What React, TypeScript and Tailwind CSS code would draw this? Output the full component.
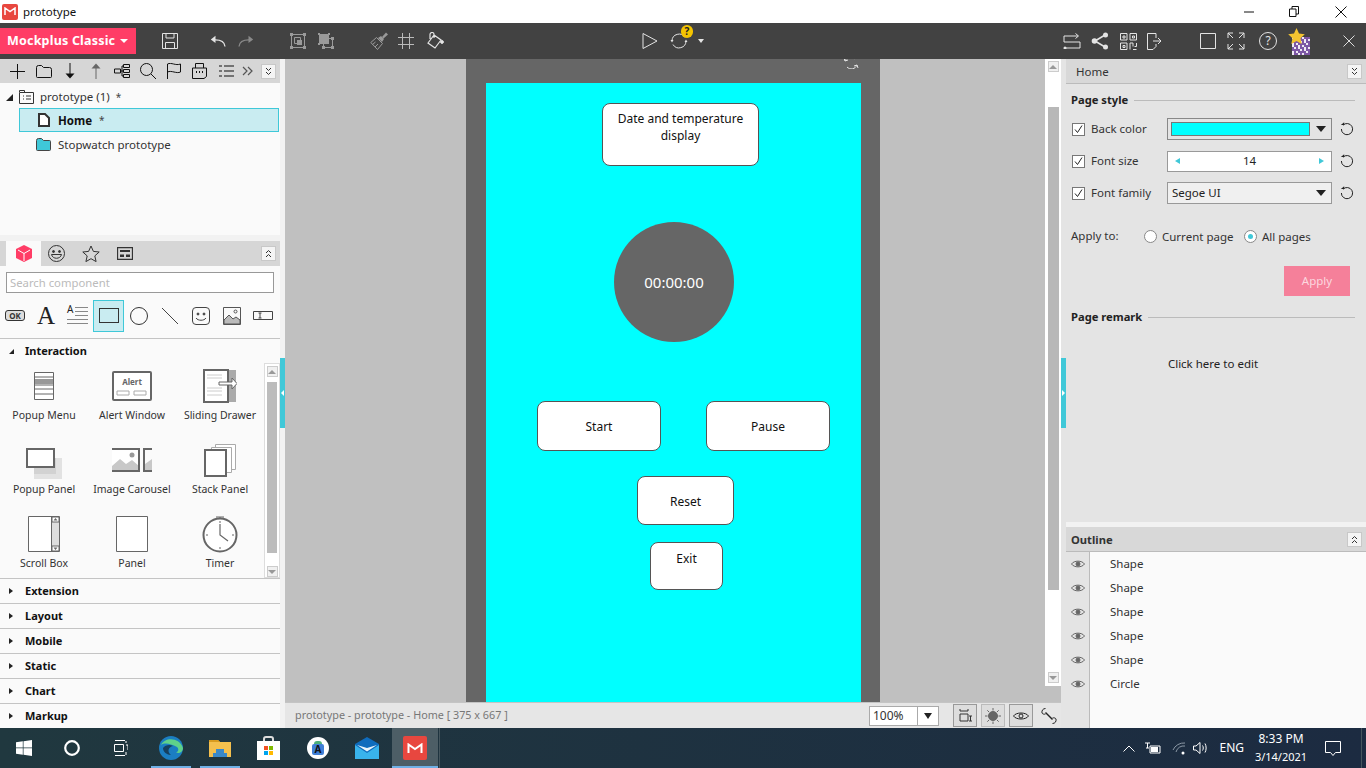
import type { ReactNode } from "react";

const groups = ["Extension", "Layout", "Mobile", "Static", "Chart", "Markup"];
const outline = ["Shape", "Shape", "Shape", "Shape", "Shape", "Circle"];

// the noisy qr badge behind the star, cells picked by a small hash
const qrCells = Array.from({ length: 81 }, (_, i) => ((i * 7 + (i % 5) * 3 + (i >> 2)) % 3 === 0 ? "#efeaf4" : "#7d57a5"));

function Ico({ w = 18, h = 18, className = "", children }: { w?: number; h?: number; className?: string; children: ReactNode }) {
  return (
    <svg width={w} height={h} viewBox={`0 0 ${w} ${h}`} fill="none" stroke="currentColor" strokeWidth="1" className={`shrink-0 ${className}`}>
      {children}
    </svg>
  );
}

function Collapse({ up = false }: { up?: boolean }) {
  return (
    <div className="w-[15px] h-[15px] bg-[#f4f4f4] border border-[#c8c8c8] flex items-center justify-center text-[#333]">
      <Ico w={9} h={9}>
        {up ? <path d="M2 4l2.500-2.500L7 4M2 8l2.500-2.500L7 8" /> : <path d="M2 1l2.500 2.500L7 1M2 5l2.500 2.500L7 5" />}
      </Ico>
    </div>
  );
}

function Eye() {
  return (
    <Ico w={14} h={10} className="text-[#666]">
      <path d="M.5 5C3 1.200 11 1.200 13.500 5 11 8.800 3 8.800.5 5z" />
      <circle cx="7" cy="5" r="2" fill="currentColor" />
    </Ico>
  );
}

function Reset() {
  return (
    <Ico w={14} h={14} className="text-[#222] ml-[8px]">
      <path d="M3 3.200A5.600 5.600 0 1 1 1.400 7" />
      <path d="M.8 3h3.400V.2z" fill="currentColor" stroke="none" />
    </Ico>
  );
}

function Check({ label }: { label: string }) {
  return (
    <div className="flex items-center w-[95px] shrink-0">
      <div className="w-[13px] h-[13px] bg-white border border-[#777] flex items-center justify-center">
        <Ico w={11} h={11} className="text-[#222]"><path d="M2 5.500l2.500 3L9 1.500" /></Ico>
      </div>
      <span className="ml-[6px] text-[#333]">{label}</span>
    </div>
  );
}

// blue splitter tab between the panels and the canvas
function Handle({ left = false }: { left?: boolean }) {
  return (
    <div className="w-[5px] pt-[299px]">
      <div className="w-[5px] h-[70px] bg-[#40c8d8] flex items-center justify-center">
        <span className={`w-0 h-0 border-y-[3px] border-y-transparent ${left ? "border-r-[3px] border-r-white" : "border-l-[3px] border-l-white"}`} />
      </div>
    </div>
  );
}

function TitleBar() {
  return (
    <div className="h-[23px] bg-white flex items-center text-[11.5px] text-[#111]">
      <div className="ml-[2px] w-[16px] h-[16px] rounded-[2px] bg-[#e8473f] flex items-center justify-center">
        <Ico w={12} h={9} className="text-white"><path d="M1 8V1l5 3.500L11 1v7" strokeWidth="1.500" /></Ico>
      </div>
      <span className="ml-[5px]">prototype</span>
      <Ico w={10} h={2} className="ml-auto mr-[35px]"><path d="M0 1h10" /></Ico>
      <Ico w={10} h={11} className="mr-[36px]"><path d="M.5 3h6.500v7.500H.5zM3 3V.5h6.500v7.500H7" /></Ico>
      <Ico w={12} h={12} className="mr-[19px]"><path d="M.5.500l11 11M11.500.5l-11 11" /></Ico>
    </div>
  );
}

function Toolbar() {
  return (
    <div className="h-[36px] bg-[#424242] flex items-center text-[#e4e4e4]">
      <div className="w-[136px] h-[26px] bg-[#ff3d66] flex items-center pl-[7px] text-white text-[12.5px] font-bold tracking-[0.2px]">
        Mockplus Classic
        <span className="ml-[5px] w-0 h-0 border-x-[4px] border-x-transparent border-t-[4px] border-t-white" />
      </div>
      <Ico w={16} h={16} className="ml-[26px]"><path d="M.5.500h15v15H.5zM4 .5v4.500h8V.5M3.500 15.500V9.500h9v6" /></Ico>
      <Ico w={16} h={12} className="ml-[32px]"><path d="M15 11.500C14.500 6.500 10 4.500 3 5" strokeWidth="1.300" /><path d="M5.500.8L.8 4.500l4.700 3.500z" fill="currentColor" stroke="none" /></Ico>
      <Ico w={16} h={12} className="ml-[12px] text-[#8a8a8a]"><path d="M1 11.500C1.500 6.500 6 4.500 13 5" strokeWidth="1.300" /><path d="M10.500.8l4.700 3.700-4.700 3.500z" fill="currentColor" stroke="none" /></Ico>
      <Ico w={16} h={16} className="ml-[36px] text-[#9a9a9a]"><path d="M1.500 1.500h13v13h-13z" /><path d="M4.500 4.500h6v6h-6z" /><path d="M7 7h5v5H7z" fill="currentColor" stroke="none" /><path d="M0 0h3v3H0zM13 0h3v3h-3zM0 13h3v3H0zM13 13h3v3h-3z" fill="currentColor" stroke="none" /></Ico>
      <Ico w={16} h={16} className="ml-[12px] text-[#9a9a9a]"><path d="M1 1h10v10H1z" fill="currentColor" stroke="none" /><path d="M5.500 5.500h9v9h-9z" /><path d="M0 0h2v2H0zM10 0h2v2h-2zM0 10h2v2H0zM13 13h3v3h-3zM13 4h3v3h-3zM4 13h3v3H4z" fill="currentColor" stroke="none" /></Ico>
      <Ico w={18} h={18} className="ml-[36px] text-[#9a9a9a]"><path d="M6.500 5.500l6 6-5 6L.8 10.500z" /><path d="M2.500 12.500l3-2.500M5 15l3-3" /><path d="M8 6l3-2 3 3-2 3z" fill="currentColor" stroke="none" /><path d="M12 5l4-4.500L18 2.500 13.500 6.500z" fill="currentColor" stroke="none" /></Ico>
      <Ico w={16} h={16} className="ml-[10px] text-[#bbb]"><path d="M4.500 0v16M11.500 0v16M0 4.500h16M0 11.500h16" /></Ico>
      <Ico w={18} h={18} className="ml-[12px]"><path d="M8 3l7 5-6 8-7-5zM4 7V2.500a2 2 0 0 1 4 0V6" strokeWidth="1.200" /><circle cx="16" cy="10" r="1.400" fill="currentColor" /></Ico>
      <Ico w={16} h={18} className="ml-[198px]"><path d="M1 1.500l14 7.500-14 7.500z" /></Ico>
      <div className="relative ml-[12px] w-[18px] h-[18px]">
        <Ico w={18} h={18}><path d="M2 9A7 7 0 0 1 15 5.500M16 9A7 7 0 0 1 3 12.500" /><path d="M.5 8h3L2 10.500zM14.500 10h3L16 7.500z" fill="currentColor" stroke="none" /></Ico>
        <div className="absolute top-[-7px] left-[11px] w-[12px] h-[13px] rounded-full bg-[#f5c400] text-[#222] text-[10px] font-bold leading-[13px] text-center">?</div>
      </div>
      <span className="ml-[10px] w-0 h-0 border-x-[3px] border-x-transparent border-t-[4px] border-t-[#e4e4e4]" />
      <Ico w={18} h={16} className="ml-[359px]"><path d="M15 3H1v6h16v6H3" /><path d="M12.500.5L15.500 3l-3 2.500" /><circle cx="2" cy="15" r="1.500" fill="currentColor" stroke="none" /></Ico>
      <Ico w={18} h={18} className="ml-[10px]"><path d="M4 9l10-6M4 9l10 6" strokeWidth="1.500" /><circle cx="3.500" cy="9" r="2.800" fill="currentColor" stroke="none" /><circle cx="14.500" cy="3" r="2.500" fill="currentColor" stroke="none" /><circle cx="14.500" cy="15" r="2.500" fill="currentColor" stroke="none" /></Ico>
      <Ico w={17} h={17} className="ml-[11px]"><path d="M.5.500h6.500v6.500H.5zM10 .5h6.500v6.500H10zM.5 10h6.500v6.500H.5zM3 3h2v2H3zM12.500 3h2v2h-2zM3 12.500h2v2H3zM10 16.500V10h3v3.500M16.500 10v3.500h-2M13 16.500h3.500" /></Ico>
      <Ico w={19} h={17} className="ml-[9px]"><path d="M10 5V.5H1.500v16H7l3-3V11M15 8H7M12 5l3 3-3 3" /></Ico>
      <Ico w={16} h={16} className="ml-[35px]"><path d="M.5.500h15v15H.5z" /></Ico>
      <Ico w={18} h={18} className="ml-[11px]"><path d="M1 6V1h5M12 1h5v5M17 12v5h-5M6 17H1v-5M1 1l5 5M17 1l-5 5M17 17l-5-5M1 17l5-5" /></Ico>
      <div className="ml-[14px] w-[18px] h-[18px] rounded-full border border-[#e4e4e4] text-[12px] leading-[16px] text-center">?</div>
      <div className="relative ml-[11px] w-[22px] h-[26px]">
        <div className="absolute left-[4px] top-[9px] w-[18px] h-[18px] grid grid-cols-[repeat(9,2px)]">
          {qrCells.map((c, i) => (
            <span key={i} className="w-[2px] h-[2px]" style={{ background: c }} />
          ))}
        </div>
        <svg width="17" height="17" viewBox="0 0 17 17" className="absolute left-0 top-0"><path d="M8.500 0l2.500 5.500 5.800.7-4.300 4 1.200 5.800-5.200-3-5.200 3 1.200-5.800-4.300-4 5.800-.7z" fill="#f4c430" /></svg>
      </div>
      <Ico w={12} h={12} className="ml-[33px] text-[#ddd]"><path d="M.5.500l11 11M11.500.5l-11 11" /></Ico>
    </div>
  );
}

function TreeTools() {
  return (
    <div className="h-[24px] bg-[#d6d6d6] flex items-center text-[#111] pl-[10px]">
      <Ico w={15} h={15}><path d="M7.500 0v15M0 7.500h15" /></Ico>
      <Ico w={16} h={13} className="ml-[11px]"><path d="M.5 2.500a2 2 0 0 1 2-2h3l2 2h6a2 2 0 0 1 2 2v7a1 1 0 0 1-1 1h-13a1 1 0 0 1-1-1z" /></Ico>
      <Ico w={12} h={16} className="ml-[12px]"><path d="M6 0v12" /><path d="M1.500 10.500h9L6 15.500z" fill="currentColor" stroke="none" /></Ico>
      <Ico w={12} h={16} className="ml-[14px] text-[#666]"><path d="M6 16V4" /><path d="M1.500 5.500h9L6 .5z" fill="currentColor" stroke="none" /></Ico>
      <Ico w={16} h={14} className="ml-[12px]"><path d="M.5 5h6v4h-6zM9.500.500h6v3h-6zM9.500 5.500h6v3h-6zM9.500 10.500h6v3h-6zM6.500 7h3M8 2v10h1.500M8 2h1.500" /></Ico>
      <Ico w={16} h={16} className="ml-[10px]"><circle cx="6.500" cy="6.500" r="6" /><path d="M11 11l5 5" /></Ico>
      <Ico w={14} h={16} className="ml-[11px]"><path d="M.5 16V1c4-2 8 2 13 0v8c-4 2-9-2-13 0" /></Ico>
      <Ico w={15} h={16} className="ml-[11px]"><path d="M.5 5h14v8.500L12 15.500H.5zM3.500 5V.5h8V5" /><path d="M4 9h1M7 9h1M10 9h1" strokeWidth="2" /></Ico>
      <Ico w={16} h={14} className="ml-[11px]"><path d="M6 2h10M6 7h10M6 12h10M1 2h3M1 7h3M1 12h3" /></Ico>
      <Ico w={12} h={10} className="ml-[8px] text-[#555]"><path d="M1 1l4 4-4 4M6 1l4 4-4 4" strokeWidth="1.200" /></Ico>
      <div className="ml-[7px]"><Collapse /></div>
    </div>
  );
}

function Tree() {
  return (
    <div className="h-[152px] bg-[#fafafa] pt-[3px] text-[11.5px] text-[#333]">
      <div className="h-[22px] flex items-center">
        <span className="ml-[6px] w-0 h-0 border-l-[7px] border-l-transparent border-b-[7px] border-b-[#222]" />
        <Ico w={15} h={14} className="ml-[6px] text-[#333]"><path d="M.5 2.500h14v11H.5zM.5 2V.5h5V2M4 6h1M4 9h1M7 6h5M7 9h5" /></Ico>
        <span className="ml-[6px]">prototype (1)</span>
        <span className="ml-[6px] text-[#444] text-[10px]">*</span>
      </div>
      <div className="ml-[19px] w-[260px] h-[24px] bg-[#c9ecf1] border border-[#3fc8d8] flex items-center">
        <Ico w={12} h={14} className="ml-[18px] text-[#333]"><path d="M1 1h6l4 4v8H1z" fill="#fff" strokeWidth="2" /></Ico>
        <span className="ml-[8px] mt-px font-bold text-[#111]">Home</span>
        <span className="ml-[7px] mt-px text-[#444] text-[10px]">*</span>
      </div>
      <div className="h-[24px] flex items-center">
        <Ico w={16} h={13} className="ml-[36px] text-[#444]"><path d="M.5 2.500a2 2 0 0 1 2-2h3l2 2h6a1 1 0 0 1 1 1v8a1 1 0 0 1-1 1h-12a1 1 0 0 1-1-1z" fill="#3fc8d8" /></Ico>
        <span className="ml-[6px] mt-[2px]">Stopwatch prototype</span>
      </div>
    </div>
  );
}

function ShapeBar() {
  return (
    <div className="h-[45px] flex items-center text-[#333]">
      <div className="ml-[5px] w-[20px] h-[11px] rounded-[3px] bg-[#ddd] border border-[#333] text-[8px] leading-[9px] text-center font-bold">OK</div>
      <span className="ml-[12px] w-[18px] text-center font-['Liberation_Serif',serif] text-[25px] leading-none text-[#222]">A</span>
      <div className="ml-[12px] w-[21px] h-[17px] flex flex-col justify-between relative">
        <span className="absolute left-0 top-[-3px] text-[10px] leading-[10px] text-[#222]">A</span>
        <span className="ml-[8px] h-px bg-[#888]" />
        <span className="ml-[8px] h-px bg-[#888]" />
        <span className="ml-[8px] h-px bg-[#888]" />
        <span className="h-px bg-[#888]" />
        <span className="h-px bg-[#888]" />
      </div>
      <div className="ml-[5px] w-[31px] h-[32px] bg-[#c9ecf1] border border-[#3fc8d8] flex items-center justify-center">
        <div className="w-[20px] h-[15px] border border-[#333]" />
      </div>
      <Ico w={18} h={18} className="ml-[6px]"><circle cx="9" cy="9" r="8.500" /></Ico>
      <Ico w={18} h={18} className="ml-[13px] text-[#444]"><path d="M1 1l16 16" /></Ico>
      <Ico w={18} h={18} className="ml-[13px] text-[#444]"><rect x=".5" y=".5" width="17" height="17" rx="3.500" /><circle cx="6" cy="7" r="1" fill="currentColor" /><circle cx="12" cy="7" r="1" fill="currentColor" /><path d="M4 11c2 3 8 3 10 0" /></Ico>
      <Ico w={18} h={18} className="ml-[13px] text-[#555]"><path d="M.5.500h17v17H.5z" /><path d="M1 13l5-5 4 4 3-2 4 3v4H1z" fill="#bbb" /><circle cx="12.500" cy="4.500" r="1.500" /></Ico>
      <Ico w={20} h={9} className="ml-[12px] text-[#444]"><path d="M.5.500h19v8H.5zM7 2v5M5.500 2h3M5.500 7h3" /></Ico>
    </div>
  );
}

function Item({ label, children }: { label: string; children: ReactNode }) {
  return (
    <div className="h-[74px] flex flex-col items-center">
      <div className="h-[46px] flex items-center justify-center">{children}</div>
      <span className="text-[10.5px] leading-[12px] text-[#333] whitespace-nowrap">{label}</span>
    </div>
  );
}

function Interaction() {
  return (
    <div className="flex h-[215px]">
      <div className="w-[264px] grid grid-cols-[88px_88px_88px] content-start">
        <Item label="Popup Menu">
          <svg width="20" height="28" viewBox="0 0 20 28" fill="none" stroke="#666"><path d="M.5.500h19v27H.5z" fill="#fff" /><path d="M1 7h18v5H1z" fill="#999" stroke="none" /><path d="M1 5h18M1 13h18M1 17h18M1 22h18" /></svg>
        </Item>
        <Item label="Alert Window">
          <svg width="40" height="30" viewBox="0 0 40 30" fill="none" stroke="#666"><rect x="1" y="1" width="38" height="28" rx="1" strokeWidth="2" fill="#fff" /><path d="M5 20h12v4H5zM22 20h12v4H22z" stroke="#aaa" /><text x="20" y="14" textAnchor="middle" fontSize="8" fontWeight="700" fill="#666" stroke="none" fontFamily="Noto Sans, sans-serif">Alert</text></svg>
        </Item>
        <Item label="Sliding Drawer">
          <svg width="34" height="34" viewBox="0 0 34 34" fill="none" stroke="#666"><rect x="25" y="1" width="8" height="32" fill="#aaa" stroke="none" /><rect x="1" y="1" width="24" height="32" strokeWidth="2" fill="#fff" /><path d="M4 6h15M4 9h15M4 19h15M4 22h15M4 26h15" stroke="#ccc" /><path d="M16 13h13V9l5 5.500-5 5.500v-4H16z" fill="#fff" /></svg>
        </Item>
        <Item label="Popup Panel">
          <svg width="36" height="31" viewBox="0 0 36 31" fill="none" className="mt-[6px]"><path d="M8 10h28v21H8z" fill="#e2e2e2" /><path d="M8 10h22v16H8z" fill="#d2d2d2" /><rect x="1" y="1" width="27" height="18" stroke="#666" strokeWidth="2" fill="#fff" /></svg>
        </Item>
        <Item label="Image Carousel">
          <svg width="40" height="24" viewBox="0 0 40 24" fill="none"><path d="M0 1h27v22H0z" fill="#fff" /><path d="M0 18l8-7 6 5 6-4 7 6v5H0z" fill="#c8c8c8" /><circle cx="20" cy="7" r="2.500" fill="#999" /><path d="M0 1h27v22H0" stroke="#666" strokeWidth="2" /><path d="M40 1h-8v22h8" stroke="#666" strokeWidth="2" /><path d="M33 16l7-5v11h-7z" fill="#c8c8c8" /></svg>
        </Item>
        <Item label="Stack Panel">
          <svg width="32" height="33" viewBox="0 0 32 33" fill="none"><path d="M11.500.5h20v25h-20z" stroke="#aaa" fill="#fff" /><path d="M7.500 3.500h20v25h-20z" stroke="#aaa" fill="#fff" /><rect x="1" y="6" width="21" height="26" stroke="#666" strokeWidth="2" fill="#fff" /></svg>
        </Item>
        <Item label="Scroll Box">
          <svg width="32" height="36" viewBox="0 0 32 36" fill="none" stroke="#666"><path d="M.5.500h31v35H.5z" fill="#fff" /><path d="M23.500.5v35" /><path d="M24 6h7v24h-7z" fill="#ddd" stroke="none" /><path d="M24 1h7v5h-7zM24 30h7v5h-7z" /><path d="M25.500 4.500l2-2.500 2 2.500zM25.500 31.500l2 2.500 2-2.500z" fill="#666" stroke="none" /></svg>
        </Item>
        <Item label="Panel">
          <svg width="32" height="36" viewBox="0 0 32 36" fill="#fff" stroke="#666"><path d="M.5.500h31v35H.5z" /></svg>
        </Item>
        <Item label="Timer">
          <svg width="36" height="37" viewBox="0 0 36 37" fill="none" stroke="#666"><path d="M14 1h8M18 1v3" /><circle cx="18" cy="19" r="16.500" strokeWidth="2" fill="#fff" /><path d="M18 8v11l8 6" strokeWidth="1.200" /><path d="M18 5v2M18 31v2M4 19h2M30 19h2" /></svg>
        </Item>
      </div>
      <div className="w-[16px] bg-white border border-[#ddd] flex flex-col items-center">
        <div className="mt-[2px] w-[11px] h-[11px] bg-[#f0f0f0] border border-[#ccc] flex items-center justify-center"><span className="w-0 h-0 border-x-[4px] border-x-transparent border-b-[4px] border-b-[#999]" /></div>
        <div className="mt-[5px] w-[10px] h-[171px] bg-[#bcbcbc]" />
        <div className="mt-[13px] w-[11px] h-[11px] bg-[#f0f0f0] border border-[#ccc] flex items-center justify-center"><span className="w-0 h-0 border-x-[4px] border-x-transparent border-t-[4px] border-t-[#999]" /></div>
      </div>
    </div>
  );
}

function LeftPanel() {
  return (
    <div className="w-[285px] shrink-0 flex bg-[#f2f2f2]">
      <div className="w-[280px] flex flex-col">
        <TreeTools />
        <Tree />
        <div className="h-[6px] bg-[#f2f2f2]" />
        <div className="h-[25px] bg-[#d6d6d6] flex items-center text-[#333]">
          <div className="ml-[6px] w-[35px] h-[25px] bg-[#fafafa] flex items-center justify-center">
            <svg width="16" height="17" viewBox="0 0 16 17"><path d="M8 0l8 4v9l-8 4-8-4V4z" fill="#ff3d66" /><path d="M8 8.500L2 5M8 8.500L14 5M8 8.500V16" stroke="#fff" /></svg>
          </div>
          <Ico w={17} h={17} className="ml-[7px]"><circle cx="8.500" cy="8.500" r="8" /><circle cx="5.500" cy="6.500" r="1" fill="currentColor" /><circle cx="11.500" cy="6.500" r="1" fill="currentColor" /><path d="M3.500 9.500h10c-1 5-9 5-10 0z" /></Ico>
          <Ico w={18} h={17} className="ml-[17px]"><path d="M9 1l2.400 5.400 5.800.6-4.400 3.900 1.300 5.700L9 13.700l-5.100 2.900 1.300-5.700L.8 7l5.800-.6z" /></Ico>
          <Ico w={16} h={13} className="ml-[17px]"><path d="M.5.500h15v12H.5z" strokeWidth="1.300" /><path d="M3 3h10v2H3zM3 7.500h4v2.500H3zM9 7.500h4v2.500H9z" fill="currentColor" stroke="none" /></Ico>
          <div className="ml-auto mr-[4px]"><Collapse up /></div>
        </div>
        <div className="bg-[#fafafa] flex-1 flex flex-col">
          <div className="px-[6px] pt-[6px]">
            <div className="h-[21px] bg-white border border-[#999] flex items-center pl-[3px] pt-px text-[11.3px] text-[#bbb]">Search component</div>
          </div>
          <ShapeBar />
          <div className="h-[25px] border-t border-[#c4c4c4] flex items-center text-[11px] font-bold text-[#111]">
            <span className="ml-[9px] w-0 h-0 border-l-[5px] border-l-transparent border-b-[5px] border-b-[#222]" />
            <span className="ml-[11px]">Interaction</span>
          </div>
          <Interaction />
          {groups.map((g) => (
            <div key={g} className="h-[25px] border-t border-[#c4c4c4] flex items-center text-[11px] font-bold text-[#111]">
              <span className="ml-[9px] w-0 h-0 border-y-[3px] border-y-transparent border-l-[4px] border-l-[#222]" />
              <span className="ml-[12px]">{g}</span>
            </div>
          ))}
        </div>
      </div>
      <Handle left />
    </div>
  );
}

const shape = "absolute bg-white border border-[#555] rounded-[8px] flex items-center justify-center text-[12px] text-[#111]";

function Canvas() {
  return (
    <div className="flex-1 flex flex-col min-w-0">
      <div className="h-[643px] flex bg-[#c0c0c0]">
        <div className="w-[760px]">
          <div className="relative ml-[181px] w-[414px] h-[643px] bg-[#666] pl-[20px] pt-[24px] overflow-hidden">
            <Ico w={16} h={12} className="absolute left-[377px] top-[-2px] text-[#e4e4e4]"><path d="M2 4a6 6 0 0 1 10-2M14 8a6 6 0 0 1-10 2M1 1l1 3 3-1M15 11l-1-3-3 1" /></Ico>
            <div className="relative w-[375px] h-[619px] bg-[#00ffff]">
              <div className={`${shape} left-[116px] top-[20px] w-[157px] h-[63px] leading-[17px] text-center pb-[15px]`}>Date and temperature<br />display</div>
              <div className="absolute left-[128px] top-[139px] w-[120px] h-[120px] rounded-full bg-[#666] flex items-center justify-center text-white text-[15px]">00:00:00</div>
              <div className={`${shape} left-[51px] top-[318px] w-[124px] h-[50px] pt-[2px]`}>Start</div>
              <div className={`${shape} left-[220px] top-[318px] w-[124px] h-[50px] pt-[2px]`}>Pause</div>
              <div className={`${shape} left-[151px] top-[393px] w-[97px] h-[49px] pt-[2px]`}>Reset</div>
              <div className={`${shape} left-[164px] top-[459px] w-[73px] h-[48px] pb-[14px]`}>Exit</div>
            </div>
          </div>
        </div>
        <div className="w-[16px] h-[627px] bg-white flex flex-col items-center">
          <div className="mt-[2px] w-[11px] h-[11px] bg-[#f0f0f0] border border-[#ccc] flex items-center justify-center"><span className="w-0 h-0 border-x-[4px] border-x-transparent border-b-[4px] border-b-[#999]" /></div>
          <div className="mt-[35px] w-[11px] h-[483px] bg-[#b8b8b8]" />
          <div className="mt-[82px] w-[11px] h-[11px] bg-[#f0f0f0] border border-[#ccc] flex items-center justify-center"><span className="w-0 h-0 border-x-[4px] border-x-transparent border-t-[4px] border-t-[#999]" /></div>
        </div>
      </div>
      <div className="h-[26px] bg-[#e6e6e6] border-t border-[#c4c4c4] flex items-center text-[12px]">
        <span className="ml-[10px] text-[10.8px] text-[#777]">prototype - prototype - Home [ 375 x 667 ]</span>
        <div className="ml-auto h-[20px] w-[70px] bg-white border border-[#aaa] flex items-center text-[#333]">
          <span className="ml-[3px] flex-1">100%</span>
          <div className="w-[21px] h-[18px] border-l border-[#aaa] flex items-center justify-center"><span className="w-0 h-0 border-x-[4px] border-x-transparent border-t-[6px] border-t-[#222]" /></div>
        </div>
        <div className="ml-[14px] w-[24px] h-[23px] bg-[#ddd] border border-[#999] flex items-center justify-center text-[#333]">
          <Ico w={13} h={13}><path d="M1 0v2h8V0M1 5h8v7H1zM10 7h3M10 12h3M11.500 7v5" /></Ico>
        </div>
        <div className="ml-[4px] w-[24px] h-[23px] bg-[#ddd] border border-[#bbb] flex items-center justify-center text-[#666]">
          <Ico w={16} h={16}><circle cx="8" cy="8" r="4.500" fill="currentColor" /><path d="M8 0v2.500M8 13.500V16M0 8h2.500M13.500 8H16M2.300 2.300l1.800 1.800M11.900 11.900l1.800 1.800M13.700 2.300l-1.800 1.800M4.100 11.900l-1.800 1.800" /></Ico>
        </div>
        <div className="ml-[4px] w-[24px] h-[23px] bg-[#ddd] border border-[#999] flex items-center justify-center text-[#222]">
          <Ico w={16} h={10}><path d="M.5 5C3 1 13 1 15.500 5 13 9 3 9 .5 5z" /><circle cx="8" cy="5" r="2" /></Ico>
        </div>
        <Ico w={16} h={16} className="ml-[8px] mr-[4px] text-[#222]"><path d="M4.500 4.500l7 7" strokeWidth="1.400" /><path d="M4.500.5C2 .5.500 2.500 1 5c.5 1 2 1.500 3.500 1" /><path d="M11.500 15.500C14 15.500 15.500 13.500 15 11c-.5-1-2-1.500-3.500-1" /></Ico>
      </div>
    </div>
  );
}

function RightPanel() {
  return (
    <div className="w-[305px] shrink-0 flex bg-[#e4e4e4] text-[11.5px]">
      <Handle />
      <div className="w-[300px] flex flex-col">
        <div className="h-[25px] bg-[#d8d8d8] border-b border-[#bbb] flex items-center pl-[10px] pr-[4px] text-[#333]">
          <span className="mt-[2px]">Home</span>
          <div className="ml-auto"><Collapse /></div>
        </div>
        <div className="h-[438px] pl-[5px]">
          <div className="mt-px h-[30px] flex items-center text-[11.2px] font-bold text-[#222]">
            Page style
            <div className="ml-[6px] w-[221px] h-px bg-[#bbb]" />
          </div>
          <div className="h-[28px] flex items-center pl-[1px]">
            <Check label="Back color" />
            <div className="w-[165px] h-[22px] border border-[#888] flex items-center">
              <div className="ml-[3px] w-[139px] h-[14px] bg-[#00ffff] border border-[#777]" />
              <span className="ml-[6px] w-0 h-0 border-x-[5px] border-x-transparent border-t-[6px] border-t-[#222]" />
            </div>
            <Reset />
          </div>
          <div className="mt-[2px] h-[32px] flex items-center pl-[1px]">
            <Check label="Font size" />
            <div className="w-[165px] h-[21px] bg-white border border-[#999] flex items-center justify-between px-[7px] text-[#222]">
              <span className="w-0 h-0 border-y-[3px] border-y-transparent border-r-[5px] border-r-[#40c8d8]" />
              14
              <span className="w-0 h-0 border-y-[3px] border-y-transparent border-l-[5px] border-l-[#40c8d8]" />
            </div>
            <Reset />
          </div>
          <div className="h-[32px] flex items-center pl-[1px]">
            <Check label="Font family" />
            <div className="w-[165px] h-[22px] bg-[#f0f0f0] border border-[#999] flex items-center pl-[4px] pr-[5px] text-[#222]">
              Segoe UI
              <span className="ml-auto w-0 h-0 border-x-[5px] border-x-transparent border-t-[6px] border-t-[#222]" />
            </div>
            <Reset />
          </div>
          <div className="mt-[14px] h-[26px] flex items-center text-[#333]">
            <span className="w-[73px]">Apply to:</span>
            <div className="w-[13px] h-[13px] rounded-full bg-white border border-[#888]" />
            <span className="ml-[5px] w-[82px] mt-[2px]">Current page</span>
            <div className="w-[13px] h-[13px] rounded-full bg-white border border-[#888] flex items-center justify-center"><div className="w-[5px] h-[5px] rounded-full bg-[#40c8d8]" /></div>
            <span className="ml-[5px] mt-[2px]">All pages</span>
          </div>
          <div className="mt-[17px] flex justify-end pr-[16px]">
            <div className="w-[66px] h-[30px] bg-[#f5809a] text-[#fcd7df] flex items-center justify-center">Apply</div>
          </div>
          <div className="mt-[6px] h-[30px] flex items-center text-[11.2px] font-bold text-[#222]">
            Page remark
            <div className="ml-[6px] flex-1 mr-[11px] h-px bg-[#bbb]" />
          </div>
          <div className="mt-[23px] text-center text-[#222] pr-[11px]">Click here to edit</div>
        </div>
        <div className="h-[5px] bg-[#f2f2f2]" />
        <div className="h-[25px] bg-[#d8d8d8] border-b border-[#bbb] flex items-center pl-[5px] pr-[4px] text-[11.2px] font-bold text-[#333]">
          <span className="mt-[2px]">Outline</span>
          <div className="ml-auto font-normal"><Collapse up /></div>
        </div>
        <div className="flex-1 flex">
          <div className="w-[24px] border-r border-[#bbb]">
            {outline.map((_, i) => (
              <div key={i} className="h-[24px] flex items-center justify-center"><Eye /></div>
            ))}
          </div>
          <div className="flex-1 bg-[#fafafa] text-[#333]">
            {outline.map((o, i) => (
              <div key={i} className="h-[24px] flex items-center pl-[20px]">{o}</div>
            ))}
          </div>
        </div>
      </div>
    </div>
  );
}

function Taskbar() {
  return (
    <div className="h-[40px] bg-linear-to-r from-[#20383f] to-[#1c2b41] flex items-center text-white relative text-[11px]">
      <svg width="16" height="16" viewBox="0 0 16 16" className="ml-[16px]" fill="#fff"><path d="M0 2.300l6.800-1V7.500H0zM7.500 1.200L16 0v7.500H7.500zM0 8.300h6.800v6.400l-6.800-1zM7.500 8.300H16V16l-8.500-1.200z" /></svg>
      <Ico w={16} h={16} className="ml-[32px]"><circle cx="8" cy="8" r="6.800" strokeWidth="2.200" /></Ico>
      <Ico w={16} h={16} className="ml-[32px]"><path d="M3 .5h10M2.500 4.500h9v7h-9zM3 15.500h10M14 1v2M14 5h2v5M14 12v3" /></Ico>
      <svg width="24" height="24" viewBox="0 0 24 24" className="ml-[31px]"><circle cx="12" cy="12" r="12" fill="#1b7ec2" /><path d="M2 9C6 1 20 1 24 12c0 4-4 6-7 4.500 3-1 3-5 0-6C12 8 6 6 2 9z" fill="#5fd18a" /><path d="M14 10c-5 1-6 6-2 9-4 0-8-3-8-7 2-3 7-4 10-2z" fill="#16405f" /></svg>
      <svg width="22" height="18" viewBox="0 0 22 18" className="ml-[26px]"><path d="M0 1h9l2 2h11v15H0z" fill="#f4c04e" /><path d="M0 1h9l2 2H0z" fill="#d99c20" /><path d="M7 10h8v4h3v4H4v-4h3z" fill="#3a89c9" /></svg>
      <div className="ml-[26px] w-[23px] h-[24px] relative">
        <div className="absolute left-[6px] top-0 w-[11px] h-[8px] border-2 border-[#ddd] rounded-t-[3px]" />
        <div className="absolute left-0 top-[5px] w-[23px] h-[19px] bg-white flex items-center justify-center">
          <div className="grid grid-cols-2 gap-px">
            <span className="w-[4px] h-[4px] bg-[#f25022]" /><span className="w-[4px] h-[4px] bg-[#7fba00]" />
            <span className="w-[4px] h-[4px] bg-[#00a4ef]" /><span className="w-[4px] h-[4px] bg-[#ffb900]" />
          </div>
        </div>
      </div>
      <div className="ml-[27px] w-[22px] h-[22px] rounded-full bg-white flex flex-col items-center justify-center">
        <div className="w-[8px] h-[3px] rounded-t-full bg-[#4caf7a]" />
        <div className="w-[12px] h-[11px] rounded-[2px] bg-[#3f7fd6] text-[#111] text-[10px] font-bold leading-[11px] text-center">A</div>
      </div>
      <svg width="24" height="22" viewBox="0 0 24 22" className="ml-[26px]"><path d="M12 0l12 7v15H0V7z" fill="#0f6cbd" /><path d="M0 8l12 8 12-8v14H0z" fill="#39b3ec" /><path d="M2 8l10 6.500L22 8l-10 3z" fill="#e8f4fb" /></svg>
      <div className="ml-[13px] w-[46px] h-[40px] bg-[#4d5e66] flex items-center justify-center">
        <div className="w-[24px] h-[24px] rounded-[2px] bg-[#e8473f] flex items-center justify-center">
          <Ico w={16} h={11} className="text-white"><path d="M1.500 10V1.500L8 6l6.500-4.500V10" strokeWidth="2" /></Ico>
        </div>
      </div>
      <div className="ml-[1px] w-px h-[40px] bg-[#45565e]" />
      <Ico w={12} h={7} className="ml-auto"><path d="M.5 6.500L6 1l5.500 5.500" /></Ico>
      <Ico w={16} h={12} className="ml-[10px]"><path d="M5 4h10v7H5z" /><path d="M6 5h7v5H6z" fill="#fff" stroke="none" /><path d="M0 1h5M2.500 1v5M1 6h3" /></Ico>
      <Ico w={14} h={13} className="ml-[11px] text-[#8b98a5]"><path d="M1 8a12 12 0 0 1 12-7M4 10a8 8 0 0 1 9-6" /><circle cx="11" cy="11" r="1.500" fill="#fff" stroke="none" /></Ico>
      <Ico w={15} h={14} className="ml-[7px]"><path d="M.5 5v4h2.500L7 12.500v-11L3 5zM9.500 4.500c1 1.500 1 3.500 0 5M12 2.500c1.500 2.500 1.500 6.500 0 9" /></Ico>
      <span className="ml-[11px] text-[12px]">ENG</span>
      <div className="ml-[9px] w-[56px] text-center leading-[18px]">
        <div className="text-[12px]">8:33 PM</div>
        <div className="whitespace-nowrap">3/14/2021</div>
      </div>
      <Ico w={16} h={15} className="ml-[16px]"><path d="M.5.500h15v11h-5l-2.500 3-2.500-3h-5z" /></Ico>
      <div className="ml-[20px] mr-[4px] w-px h-[40px] bg-[#45565e]" />
      <div className="absolute left-[151px] bottom-0 w-[40px] h-[2px] bg-[#6fb0e6]" />
      <div className="absolute left-[200px] bottom-0 w-[40px] h-[2px] bg-[#6fb0e6]" />
      <div className="absolute left-[392px] bottom-0 w-[46px] h-[2px] bg-[#6fb0e6]" />
    </div>
  );
}

export default function App() {
  return (
    <div className="w-[1366px] h-[768px] overflow-hidden flex flex-col font-['Noto_Sans',sans-serif]">
      <TitleBar />
      <Toolbar />
      <div className="h-[669px] flex">
        <LeftPanel />
        <Canvas />
        <RightPanel />
      </div>
      <Taskbar />
    </div>
  );
}
